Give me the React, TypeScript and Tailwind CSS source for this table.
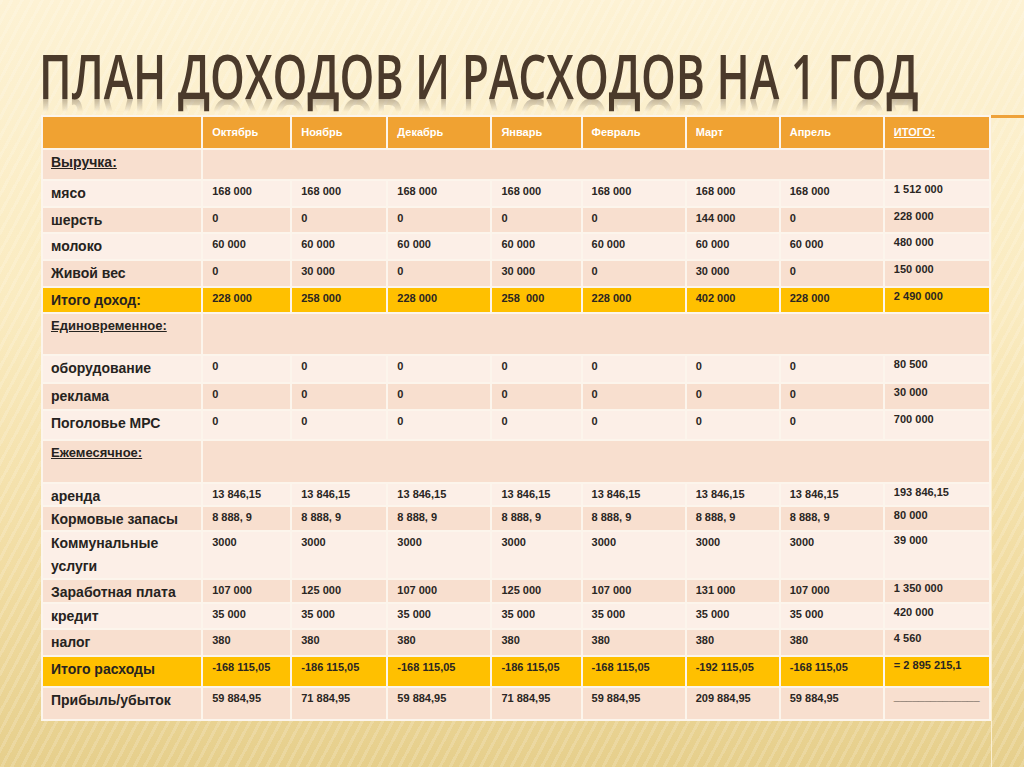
import React from "react";

type Row = {
  label: string;
  values?: string[];
  kind: "section" | "sectionWide" | "data" | "total";
  shade?: "dark" | "light";
  h: number;
  small?: boolean;
};

const months = ["Октябрь", "Ноябрь", "Декабрь", "Январь", "Февраль", "Март", "Апрель"];
const colWidths = [160, 89, 96, 104, 90, 104, 94, 104, 106];

const seven = (v: string) => [v, v, v, v, v, v, v];

const rows: Row[] = [
  { label: "Выручка:", kind: "section", shade: "dark", h: 31 },
  { label: "мясо", kind: "data", shade: "light", h: 27, values: [...seven("168 000"), "1 512 000"] },
  { label: "шерсть", kind: "data", shade: "dark", h: 26, values: ["0", "0", "0", "0", "0", "144 000", "0", "228 000"] },
  { label: "молоко", kind: "data", shade: "light", h: 27, values: [...seven("60 000"), "480 000"] },
  { label: "Живой вес", kind: "data", shade: "dark", h: 27, values: ["0", "30 000", "0", "30 000", "0", "30 000", "0", "150 000"] },
  {
    label: "Итого доход:",
    kind: "total",
    h: 26,
    values: ["228 000", "258 000", "228 000", "258  000", "228 000", "402 000", "228 000", "2 490 000"],
  },
  { label: "Единовременное:", kind: "sectionWide", shade: "dark", h: 42, small: true },
  { label: "оборудование", kind: "data", shade: "light", h: 28, values: [...seven("0"), "80 500"] },
  { label: "реклама", kind: "data", shade: "dark", h: 27, values: [...seven("0"), "30 000"] },
  { label: "Поголовье МРС", kind: "data", shade: "light", h: 30, values: [...seven("0"), "700 000"] },
  { label: "Ежемесячное:", kind: "sectionWide", shade: "dark", h: 43, small: true },
  { label: "аренда", kind: "data", shade: "light", h: 23, values: [...seven("13 846,15"), "193 846,15"] },
  { label: "Кормовые запасы", kind: "data", shade: "dark", h: 25, values: [...seven("8 888, 9"), "80 000"] },
  { label: "Коммунальные услуги", kind: "data", shade: "light", h: 48, values: [...seven("3000"), "39 000"] },
  {
    label: "Заработная плата",
    kind: "data",
    shade: "dark",
    h: 24,
    values: ["107 000", "125 000", "107 000", "125 000", "107 000", "131 000", "107 000", "1 350 000"],
  },
  { label: "кредит", kind: "data", shade: "light", h: 26, values: [...seven("35 000"), "420 000"] },
  { label: "налог", kind: "data", shade: "dark", h: 27, values: [...seven("380"), "4 560"] },
  {
    label: "Итого расходы",
    kind: "total",
    h: 31,
    values: [
      "-168 115,05",
      "-186 115,05",
      "-168 115,05",
      "-186 115,05",
      "-168 115,05",
      "-192 115,05",
      "-168 115,05",
      "= 2 895 215,1",
    ],
  },
  {
    label: "Прибыль/убыток",
    kind: "data",
    shade: "dark",
    h: 33,
    values: [
      "59 884,95",
      "71 884,95",
      "59 884,95",
      "71 884,95",
      "59 884,95",
      "209 884,95",
      "59 884,95",
      "______________",
    ],
  },
];

const cellBorder = "border-2 border-[#fcf5ec] align-top";
const labelCls = "pl-[8px] pr-1 pt-[3px] pb-0 text-[14px] leading-[18px] font-bold text-[#262320]";
const valueCls = "pl-[9px] pr-1 pt-[3px] pb-0 text-[11px] leading-[14px] font-bold text-[#2a2623] whitespace-pre";

function rowBg(r: Row) {
  if (r.kind === "total") return "bg-[#ffc000]";
  return r.shade === "dark" ? "bg-[#f8dfcf]" : "bg-[#fcefe7]";
}

export default function App() {
  return (
    <div
      className="relative w-[1024px] h-[767px] overflow-hidden [font-family:'Liberation_Sans',Arial,sans-serif] [background-image:repeating-linear-gradient(118deg,rgba(255,255,255,0.16)_0px,rgba(255,255,255,0.16)_3px,transparent_3px,transparent_9px),linear-gradient(180deg,#fdf2d4_0%,#faebc0_40%,#f1dca2_75%,#e6cf8c_100%)]"
    >
      {/* decorative frame line at right */}
      <div className="absolute left-[991px] top-[115px] w-[33px] h-[3px] bg-[#eea23a]" />
      <div className="absolute left-[991px] top-[118px] w-[1px] h-[649px] bg-[#fbefd0]" />

      <div className="flex flex-col pt-[44px]">
        <div className="pl-[39px] h-[60px]">
          <h1 className="inline-block origin-left scale-x-[0.715] whitespace-nowrap text-[62px] leading-none font-semibold text-[#4b3a2b] [font-family:'Open_Sans',sans-serif] [-webkit-box-reflect:below_-14px_linear-gradient(transparent_68%,rgba(255,255,255,0.5))]">
            ПЛАН ДОХОДОВ И РАСХОДОВ НА 1 ГОД
          </h1>
        </div>

        <table className="mt-[11px] ml-[41px] w-[950px] table-fixed border-collapse">
          <colgroup>
            {colWidths.map((w, i) => (
              <col key={i} style={{ width: w }} />
            ))}
          </colgroup>
          <thead>
            <tr className="h-[33px] bg-[#f0a232]">
              <th className={cellBorder} />
              {months.map((m) => (
                <th
                  key={m}
                  className={`${cellBorder} pl-[9px] pt-[8px] text-left text-[11px] leading-[14px] font-bold text-white`}
                >
                  {m}
                </th>
              ))}
              <th className={`${cellBorder} pl-[9px] pt-[8px] text-left text-[11px] leading-[14px] font-bold text-white underline`}>
                ИТОГО:
              </th>
            </tr>
          </thead>
          <tbody>
            {rows.map((r) => (
              <tr key={r.label} className={rowBg(r)} style={{ height: r.h }}>
                <td
                  className={`${cellBorder} ${labelCls} ${r.small ? "!text-[13px] !pt-[3px]" : ""} ${
                    r.kind.startsWith("section") ? "underline" : ""
                  } ${r.label === "Коммунальные услуги" ? "!leading-[23px] !pt-0" : ""}`}
                >
                  {r.label}
                </td>
                {r.kind === "section" && (
                  <>
                    <td className={cellBorder} colSpan={7} />
                    <td className={cellBorder} />
                  </>
                )}
                {r.kind === "sectionWide" && <td className={cellBorder} colSpan={8} />}
                {r.values &&
                  r.values.map((v, i) => (
                    <td key={i} className={`${cellBorder} ${valueCls} ${i === 7 ? "!pt-[1px]" : ""}`}>
                      {v}
                    </td>
                  ))}
              </tr>
            ))}
          </tbody>
        </table>
      </div>
    </div>
  );
}
